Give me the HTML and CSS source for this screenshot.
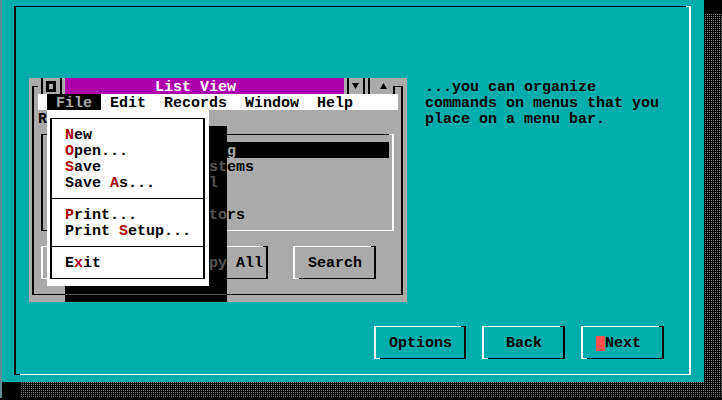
FILE: index.html
```html
<!DOCTYPE html>
<html>
<head>
<meta charset="utf-8">
<title>List View</title>
<link rel="stylesheet" href="styles.css">
</head>
<body>
<div class="screen">
  <div class="grid">
    <div class="edge"></div>
    <div class="desk"></div>
    <div class="shade shade-r"></div>
    <div class="shade shade-b"></div>
    <div class="bevel sunken frame"></div>

    <div class="txt blurb">...you can organize<br>commands on menus that you<br>place on a menu bar.</div>

    <div class="bevel raised btn btn-options">Options</div>
    <div class="bevel raised btn btn-back">Back</div>
    <div class="bevel raised btn btn-next"><span class="cursor"></span>Next</div>

    <div class="win">
      <div class="bevel flat wframe"></div>
      <div class="ctl"><svg width="27" height="16" viewBox="0 0 27 16"><rect x="3" y="0" width="2" height="16" fill="#000"/><rect x="8" y="3" width="10" height="11" fill="#000"/><rect x="11" y="6" width="4" height="5" fill="#aaaaaa"/><rect x="22" y="0" width="2" height="16" fill="#000"/></svg></div>
      <div class="txt title">List View</div>
      <div class="wctl"><svg width="54" height="16" viewBox="0 0 54 16"><rect x="3" y="0" width="2" height="16" fill="#000"/><polygon points="8,5 15,5 11.5,11" fill="#000"/><rect x="19" y="0" width="2" height="16" fill="#000"/><rect x="24" y="0" width="2" height="16" fill="#000"/><polygon points="36,11 43,11 39.5,5" fill="#000"/><rect x="49" y="8" width="2" height="8" fill="#000"/><rect x="49" y="8" width="5" height="1" fill="#000"/></svg></div>
      <div class="txt menubar"> <span class="menu-on"> File </span> Edit  Records  Window  Help</div>
      <div class="txt label">Records:</div>
      <div class="bevel sunken listbox"></div>
      <div class="txt li li1 sel">Sales &amp; Marketing</div>
      <div class="txt li li2">Information Systems</div>
      <div class="txt li li3">Quality Control</div>
      <div class="txt li li4">Engineering</div>
      <div class="txt li li5">Board of Directors</div>
      <div class="bevel raised btn wb1">Select</div>
      <div class="bevel raised btn wb2">Copy All</div>
      <div class="bevel raised btn wb3">Search</div>

      <div class="drop">
        <div class="drop-box">
          <div class="mi"><span class="hk">N</span>ew</div>
          <div class="mi"><span class="hk">O</span>pen...</div>
          <div class="mi"><span class="hk">S</span>ave</div>
          <div class="mi">Save <span class="hk">A</span>s...</div>
          <div class="sep"></div>
          <div class="mi"><span class="hk">P</span>rint...</div>
          <div class="mi">Print <span class="hk">S</span>etup...</div>
          <div class="sep"></div>
          <div class="mi">E<span class="hk">x</span>it</div>
        </div>
      </div>
      <div class="txt dshade dshade-r"><br><br>st<br>l<br><br>to<br><br><br>py</div>
      <div class="dshade dshade-b"></div>
    </div>
  </div>
</div>
</body>
</html>
```

FILE: styles.css
```css
* { box-sizing: border-box; }

body {
  margin: 0;
  background: #000;
}

.screen {
  width: 722px;
  height: 400px;
  overflow: hidden;
  background: #000;
  font-family: "Liberation Mono", "DejaVu Sans Mono", monospace;
  font-weight: 700;
  font-size: 15px;
  line-height: 16px;
  color: #000;
}

/* 80 x 25 character grid, 9 x 16 cells */
.grid {
  display: grid;
  grid-template-columns: 2px repeat(80, 9px);
  grid-template-rows: repeat(25, 16px);
  margin-top: -2px;
}

.grid > *,
.win > * {
  position: relative;
}

/* text sits 2px low in its character cell */
.txt {
  white-space: pre;
  padding-top: 2px;
}

.edge {
  grid-column: 1 / 2;
  grid-row: 1 / 26;
  background: #5f8c90;
}

.desk {
  grid-column: 2 / 80;
  grid-row: 1 / 25;
  background: #00adad;
}

.shade {
  background-color: #000;
  background-image: conic-gradient(#7a7a7a 0 25%, #000 0);
  background-size: 2px 2px;
}
.shade-r { grid-column: 80 / 82; grid-row: 2 / 26; }
.shade-b { grid-column: 4 / 80; grid-row: 25 / 26; }

/* box-drawing frames: lines run through the middle of the character cells */
.bevel {
  margin: 8px 4px 7px 3px;
  border-style: solid;
  border-width: 1px 2px;
  border-color: var(--hi) var(--lo) var(--lo) var(--hi);
}
.bevel::before {
  content: "";
  position: absolute;
  top: -1px;
  right: -2px;
  width: 5px;
  height: 1px;
  background: var(--lo);
}
.bevel::after {
  content: "";
  position: absolute;
  bottom: -1px;
  left: -2px;
  width: 6px;
  height: 1px;
  background: var(--hi);
}
.raised { --hi: #ffffff; --lo: #000000; }
.sunken { --hi: #000000; --lo: #ffffff; }
.flat { --hi: #000000; --lo: #000000; }

.frame { grid-column: 3 / 79; grid-row: 1 / 25; }

.blurb {
  grid-column: 49 / 79;
  grid-row: 6 / 9;
}

.btn {
  white-space: pre;
  padding: 9px 0 0 13px;
}
.btn-options { grid-column: 43 / 54; grid-row: 21 / 24; }
.btn-back { grid-column: 55 / 65; grid-row: 21 / 24; padding-left: 22px; }
.btn-next { grid-column: 66 / 76; grid-row: 21 / 24; }

.cursor {
  display: inline-block;
  width: 9px;
  height: 15px;
  background: #ff4f4f;
  vertical-align: top;
}

/* List View window */
.win {
  grid-column: 5 / 47;
  grid-row: 6 / 20;
  display: grid;
  grid-template-columns: repeat(42, 9px);
  grid-template-rows: repeat(14, 16px);
  background: #aaaaaa;
}

.wframe { grid-column: 1 / 43; grid-row: 1 / 15; }

.ctl { grid-column: 2 / 5; grid-row: 1 / 2; background: #aaaaaa; }
.wctl { grid-column: 36 / 42; grid-row: 1 / 2; background: #aaaaaa; }
.ctl svg, .wctl svg { display: block; }

.title {
  grid-column: 5 / 36;
  grid-row: 1 / 2;
  background: #ad00ad;
  color: #ffffff;
  padding-left: 90px;
}

.menubar {
  grid-column: 2 / 42;
  grid-row: 2 / 3;
  background: #ffffff;
}
.menu-on {
  display: inline-block;
  vertical-align: top;
  height: 16px;
  margin-top: -2px;
  padding-top: 2px;
  background: #000;
  color: #aaaaaa;
}

.label { grid-column: 2 / 20; grid-row: 3 / 4; }

.listbox { grid-column: 2 / 42; grid-row: 4 / 11; }

.li {
  grid-column: 3 / 41;
  padding-left: 36px;
}
.li1 { grid-row: 5 / 6; }
.li2 { grid-row: 6 / 7; }
.li3 { grid-row: 7 / 8; }
.li4 { grid-row: 8 / 9; }
.li5 { grid-row: 9 / 10; }
.sel {
  background: #000;
  color: #aaaaaa;
}

.wb1 { grid-column: 2 / 15; grid-row: 11 / 14; }
.wb2 { grid-column: 17 / 28; grid-row: 11 / 14; }
.wb3 { grid-column: 30 / 40; grid-row: 11 / 14; }

/* File menu */
.drop {
  grid-column: 3 / 21;
  grid-row: 3 / 14;
  background: #ffffff;
}
.drop-box {
  margin: 8px 4px 0 3px;
  border: solid #000;
  border-width: 1px 2px;
  padding: 7px 0 8px;
}
.mi {
  height: 16px;
  padding: 2px 0 0 13px;
  white-space: pre;
}
.hk { color: #a80000; }
.sep {
  height: 16px;
  background: linear-gradient(#000, #000) 0 8px / 100% 1px no-repeat;
}

.dshade {
  background-color: #000;
  color: #555555;
}
.dshade-r {
  grid-column: 21 / 23;
  grid-row: 4 / 15;
  background-image: linear-gradient(#555555, #555555);
  background-position: 0 168px;
  background-size: 100% 1px;
  background-repeat: no-repeat;
}
.dshade-b {
  grid-column: 5 / 21;
  grid-row: 14 / 15;
  background-image: linear-gradient(#555555, #555555);
  background-position: 0 8px;
  background-size: 100% 1px;
  background-repeat: no-repeat;
}
```
